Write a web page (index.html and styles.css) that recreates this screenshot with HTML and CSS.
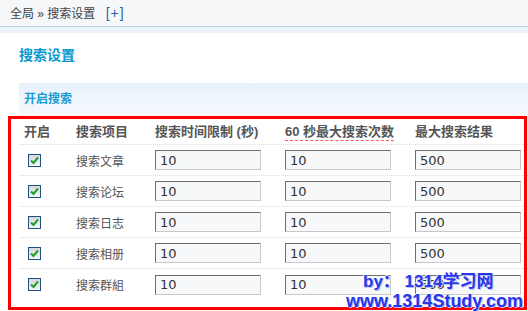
FILE: index.html
```html
<!DOCTYPE html>
<html>
<head lang="zh-CN">
	<meta charset="UTF-8">
	<title>搜索设置</title>
	<link rel="stylesheet" href="styles.css">
</head>
<body>

<div class="topbar">全局 &raquo; 搜索设置 <a class="add" href="#">[+]</a></div>
<div class="band"></div>

<div class="main">
	<h1>搜索设置</h1>
	<div class="section-bar">开启搜索</div>

	<div class="table">
		<div class="row head">
			<div class="cell">开启</div>
			<div class="cell">搜索项目</div>
			<div class="cell">搜索时间限制 (秒)</div>
			<div class="cell"><span class="tip">60 秒最大搜索次数</span></div>
			<div class="cell">最大搜索结果</div>
		</div>
		<div class="row">
			<div class="cell"><span class="check"><svg viewBox="0 0 11 11" width="11" height="11"><path d="M2 5.5 L4.5 8 L9 2.5" fill="none" stroke="#1f9f2a" stroke-width="2"/></svg></span></div>
			<div class="cell">搜索文章</div>
			<div class="cell"><input class="text" value="10"></div>
			<div class="cell"><input class="text" value="10"></div>
			<div class="cell"><input class="text" value="500"></div>
		</div>
		<div class="row">
			<div class="cell"><span class="check"><svg viewBox="0 0 11 11" width="11" height="11"><path d="M2 5.5 L4.5 8 L9 2.5" fill="none" stroke="#1f9f2a" stroke-width="2"/></svg></span></div>
			<div class="cell">搜索论坛</div>
			<div class="cell"><input class="text" value="10"></div>
			<div class="cell"><input class="text" value="10"></div>
			<div class="cell"><input class="text" value="500"></div>
		</div>
		<div class="row">
			<div class="cell"><span class="check"><svg viewBox="0 0 11 11" width="11" height="11"><path d="M2 5.5 L4.5 8 L9 2.5" fill="none" stroke="#1f9f2a" stroke-width="2"/></svg></span></div>
			<div class="cell">搜索日志</div>
			<div class="cell"><input class="text" value="10"></div>
			<div class="cell"><input class="text" value="10"></div>
			<div class="cell"><input class="text" value="500"></div>
		</div>
		<div class="row">
			<div class="cell"><span class="check"><svg viewBox="0 0 11 11" width="11" height="11"><path d="M2 5.5 L4.5 8 L9 2.5" fill="none" stroke="#1f9f2a" stroke-width="2"/></svg></span></div>
			<div class="cell">搜索相册</div>
			<div class="cell"><input class="text" value="10"></div>
			<div class="cell"><input class="text" value="10"></div>
			<div class="cell"><input class="text" value="500"></div>
		</div>
		<div class="row last">
			<div class="cell"><span class="check"><svg viewBox="0 0 11 11" width="11" height="11"><path d="M2 5.5 L4.5 8 L9 2.5" fill="none" stroke="#1f9f2a" stroke-width="2"/></svg></span></div>
			<div class="cell">搜索群組</div>
			<div class="cell"><input class="text" value="10"></div>
			<div class="cell"><input class="text" value="10"></div>
			<div class="cell"><input class="text" value="500"></div>
		</div>
	</div>
</div>

<div class="red-frame"></div>

<div class="watermark">
	<p class="line1">by： 1314学习网</p>
	<p class="line2">www.1314Study.com</p>
</div>

</body>
</html>
```

FILE: styles.css
```css
* {
	margin: 0;
	padding: 0;
	box-sizing: border-box;
}
body {
	font-family: "Liberation Sans", "Noto Sans CJK SC", sans-serif;
	font-size: 12px;
	color: #555;
	background: #fff;
	position: relative;
	width: 528px;
	height: 311px;
	overflow: hidden;
}
.topbar {
	height: 27px;
	line-height: 26px;
	padding-left: 10px;
	background: #f6f7f9;
	border-bottom: 1px solid #b3d3d9;
	color: #444;
}
.topbar .add {
	color: #2d64a8;
	text-decoration: none;
	font-size: 14px;
	margin-left: 7px;
	letter-spacing: 1px;
}
.band {
	height: 6px;
	background: #eaf3fa;
}
.main {
	padding-left: 19px;
}
.main h1 {
	margin-top: 12px;
	font-size: 14px;
	line-height: 20px;
	color: #0b98cf;
	font-weight: 700;
}
.section-bar {
	margin-top: 18px;
	height: 33px;
	line-height: 33px;
	padding-left: 5px;
	background: linear-gradient(#e7f1fb, #f6f9fd);
	color: #1a9ad0;
	font-weight: 700;
}
.table {
	width: 509px;
}
.row {
	display: grid;
	grid-template-columns: 52px 79px 130px 130px 1fr;
	height: 31px;
	align-items: center;
	border-bottom: 1px dotted #c9e1f1;
}
.row.head {
	height: 29px;
	font-size: 13px;
	font-weight: 700;
}
.row.last {
	border-bottom: 0;
}
.cell {
	padding-left: 5px;
	white-space: nowrap;
}
.tip {
	border-bottom: 1px dashed #ff5a5a;
	padding-bottom: 1px;
}
.check {
	display: flex;
	align-items: center;
	justify-content: center;
	width: 13px;
	height: 13px;
	margin-left: 4px;
	border: 1px solid #1d5283;
	background: linear-gradient(#d8d8d8, #f6f6f6);
}
.text {
	display: block;
	width: 106px;
	height: 20px;
	padding: 0 4px;
	font-family: "DejaVu Sans", sans-serif;
	font-size: 13px;
	color: #333;
	background: #f7f8fa;
	border: 1px solid #c8c8c8;
	border-top-color: #6f6f6f;
	border-left-color: #6f6f6f;
	outline: 0;
}
.red-frame {
	position: absolute;
	left: 8px;
	top: 116px;
	width: 519px;
	height: 194px;
	border: 3px solid #f00;
}
.watermark {
	position: absolute;
	left: 346px;
	top: 271px;
	font-family: "Liberation Sans", "Noto Sans CJK SC", sans-serif;
	font-weight: 700;
	color: #2a36e8;
	text-shadow: 1px 1px 0 #b9c1f3, -1px 0 0 #fff, 0 -1px 0 #fff;
	white-space: nowrap;
}
.watermark .line1 {
	padding-left: 17px;
	font-size: 17px;
	line-height: 21px;
}
.watermark .line2 {
	font-size: 18px;
	line-height: 19px;
}
```
